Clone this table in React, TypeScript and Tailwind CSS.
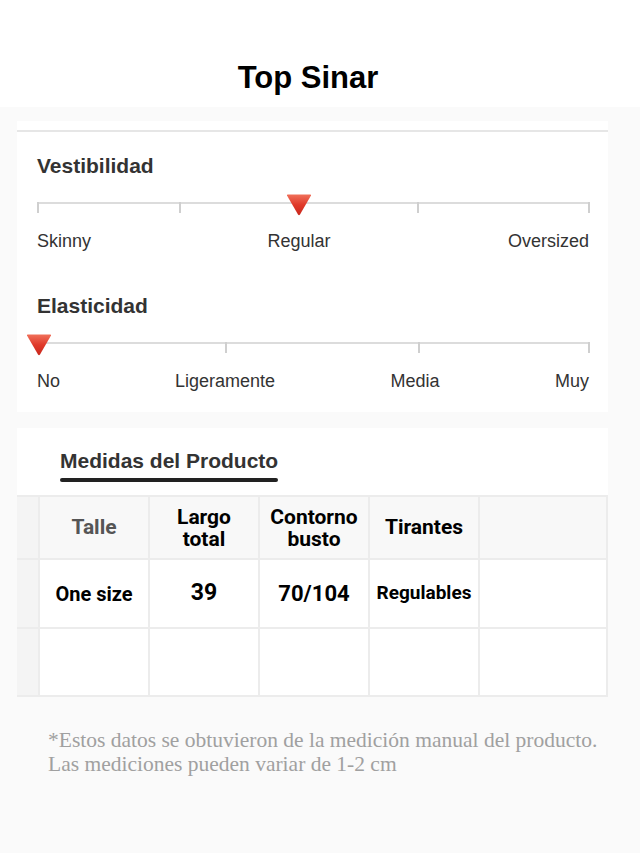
import React from "react";

const sans = { fontFamily: '"Liberation Sans", Arial, sans-serif' };

function Triangle() {
  return (
    <svg width="26" height="22" viewBox="0 0 26 22">
      <defs>
        <linearGradient id="tri" x1="0" y1="0" x2="0" y2="1">
          <stop offset="0" stopColor="#f0705a" />
          <stop offset="0.5" stopColor="#e0392a" />
          <stop offset="1" stopColor="#c8281c" />
        </linearGradient>
      </defs>
      <path d="M1 1.5 Q0.5 0.5 2 0.5 L24 0.5 Q25.5 0.5 25 1.5 L14 20.5 Q13 22 12 20.5 Z" fill="url(#tri)" />
    </svg>
  );
}

function Scale({ ticks, pointer, labels }: { ticks: number[]; pointer: number; labels: { text: string; x: number; align: string }[] }) {
  return (
    <div>
      <div className="relative h-[24px] mx-[20px]">
        <div className="absolute left-0 right-0 top-[8px] h-[2px] bg-[#dcdcdc]" />
        {ticks.map((t) => (
          <div key={t} className="absolute top-[8px] w-[1.5px] h-[11px] bg-[#cfcfcf]" style={{ left: t - 37 }} />
        ))}
        <div className="absolute top-0" style={{ left: pointer - 37 - 13 }}>
          <Triangle />
        </div>
      </div>
      <div className="relative h-[24px] mx-[20px] mt-[10px] text-[18px] text-[#333]">
        {labels.map((l) => (
          <span
            key={l.text}
            className={
              "absolute top-0 whitespace-nowrap " +
              (l.align === "center" ? "-translate-x-1/2" : l.align === "right" ? "-translate-x-full" : "")
            }
            style={{ left: l.x - 37 }}
          >
            {l.text}
          </span>
        ))}
      </div>
    </div>
  );
}

export default function App() {
  const cell = "flex items-center justify-center text-center border-r-2 border-b-2 border-[#ececec]";
  return (
    <div className="w-[640px] h-[853px] bg-[#fafafa] overflow-hidden" style={sans}>
      <div className="bg-white h-[107px] flex justify-center pt-[60px] pr-[24px]">
        <h1 className="text-[31px] leading-[36px] font-bold text-black">Top Sinar</h1>
      </div>

      <div className="ml-[17px] w-[591px] mt-[14px] bg-white h-[291px]">
        <div className="h-[9px]" />
        <div className="h-[2px] bg-[#e6e6e6]" />
        <div className="pt-[21px]">
          <h2 className="ml-[20px] text-[21px] font-bold text-[#333] leading-[26px]">Vestibilidad</h2>
          <div className="mt-[15px]">
            <Scale
              ticks={[37, 179, 417, 588]}
              pointer={299}
              labels={[
                { text: "Skinny", x: 37, align: "left" },
                { text: "Regular", x: 299, align: "center" },
                { text: "Oversized", x: 589, align: "right" },
              ]}
            />
          </div>
          <h2 className="ml-[20px] mt-[41px] text-[21px] font-bold text-[#333] leading-[26px]">Elasticidad</h2>
          <div className="mt-[15px]">
            <Scale
              ticks={[225, 418, 588]}
              pointer={39}
              labels={[
                { text: "No", x: 37, align: "left" },
                { text: "Ligeramente", x: 225, align: "center" },
                { text: "Media", x: 415, align: "center" },
                { text: "Muy", x: 589, align: "right" },
              ]}
            />
          </div>
        </div>
      </div>

      <div className="ml-[17px] w-[591px] mt-[16px] bg-white">
        <div className="h-[67px] pl-[43px] pt-[20px]">
          <div className="inline-block">
            <div className="text-[21px] font-bold text-[#333] leading-[26px]">Medidas del Producto</div>
            <div className="mt-[4px] h-[4px] bg-[#222] rounded-sm" />
          </div>
        </div>
        <div
          className="grid grid-cols-[23px_110px_110px_110px_110px_128px] grid-rows-[63px_69px_68px] border-t-2 border-[#ececec]"
          style={{ fontFamily: 'Roboto, "Liberation Sans", sans-serif' }}
        >
          <div className={cell + " bg-[#f4f4f4]"} />
          <div className={cell + " bg-[#f8f8f8] text-[21px] font-bold text-[#555]"}>Talle</div>
          <div className={cell + " bg-[#f8f8f8] text-[21px] font-bold text-black leading-[22px]"}>Largo<br />total</div>
          <div className={cell + " bg-[#f8f8f8] text-[21px] font-bold text-black leading-[22px]"}>Contorno<br />busto</div>
          <div className={cell + " bg-[#f8f8f8] text-[21px] font-bold text-black"}>Tirantes</div>
          <div className={cell + " bg-[#f8f8f8]"} />

          <div className={cell + " bg-[#f4f4f4]"} />
          <div className={cell + " bg-white text-[20px] font-bold text-black"}>One size</div>
          <div className={cell + " bg-white text-[23px] font-bold text-black"}>39</div>
          <div className={cell + " bg-white text-[22px] font-bold text-black"}>70/104</div>
          <div className={cell + " bg-white text-[19px] font-bold text-black"}>Regulables</div>
          <div className={cell + " bg-white"} />

          <div className={cell + " bg-[#f4f4f4]"} />
          <div className={cell + " bg-white"} />
          <div className={cell + " bg-white"} />
          <div className={cell + " bg-white"} />
          <div className={cell + " bg-white"} />
          <div className={cell + " bg-white"} />
        </div>
      </div>

      <div
        className="ml-[48px] mt-[31px] text-[21.5px] leading-[24px] text-[#a0a0a0]"
        style={{ fontFamily: '"Liberation Serif", "Times New Roman", serif' }}
      >
        <p>*Estos datos se obtuvieron de la medición manual del producto.</p>
        <p>Las mediciones pueden variar de 1-2 cm</p>
      </div>
    </div>
  );
}
